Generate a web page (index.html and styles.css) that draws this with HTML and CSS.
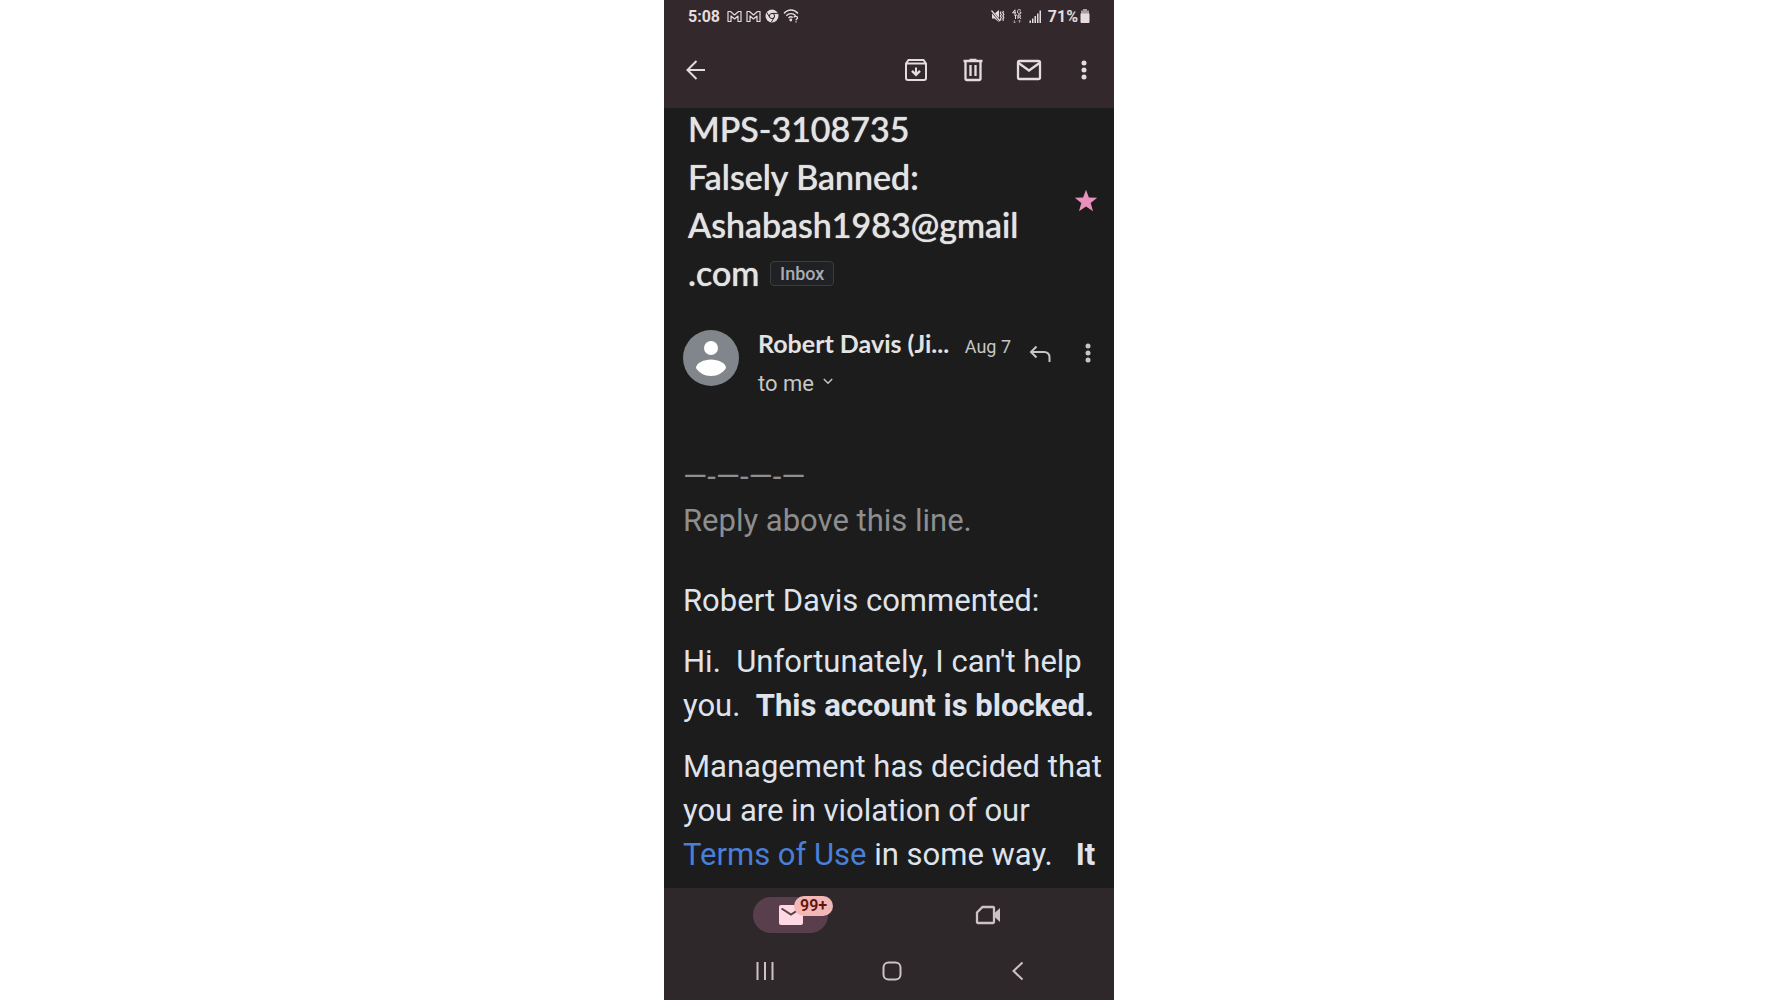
FILE: index.html
```html
<!DOCTYPE html>
<html lang="en">
<head>
<meta charset="utf-8">
<meta name="viewport" content="width=device-width, initial-scale=1">
<title>Mail</title>
<link rel="stylesheet" href="styles.css">
</head>
<body>
<div class="phone">
  <header class="top">
    <div class="status">
      <div class="status-group">
        <span class="time">5:08</span>
        <svg width="15" height="13" viewBox="0 0 15 13" fill="none" stroke="currentColor" stroke-width="1.2" stroke-linejoin="round"><path d="M1 1.500h2.500l4 3.500 4-3.500H14v10h-3V6L7.500 9 4 6v5.500H1z"/></svg>
        <svg width="15" height="13" viewBox="0 0 15 13" fill="none" stroke="currentColor" stroke-width="1.2" stroke-linejoin="round"><path d="M1 1.500h2.500l4 3.500 4-3.500H14v10h-3V6L7.500 9 4 6v5.500H1z"/></svg>
        <svg width="14" height="14" viewBox="0 0 14 14"><circle cx="7" cy="7" r="6.500" fill="currentColor"/><g fill="none" stroke="#33292d"><circle cx="7" cy="7" r="2.600"/><path d="M7 4.400h6M4.700 8.300 1.800 3.500M9.200 8.300 6.500 13"/></g></svg>
        <svg width="16" height="14" viewBox="0 0 16 14" fill="none" stroke="currentColor" stroke-width="1.300"><path d="M1 4.500C5-.2 11-.2 15 4.500M3.300 6.800c2.700-3 6.700-3 9.400 0M5.500 9c1.400-1.500 3-1.500 4.300-.5"/><circle cx="7.800" cy="11" r=".8" fill="currentColor"/><path d="M11 8.500c0-1.500 3.500-1.500 3.500.2 0 1.300-1.500 1.100-1.500 2.500M13 12.300v1.200"/></svg>
      </div>
      <div class="status-group status-right">
        <svg width="14" height="14" viewBox="0 0 14 14"><path d="M1 4.500h2.500L8 1v12L3.500 9.500H1z" fill="currentColor"/><path d="m.5 2 8.500 10" stroke="#33292d" stroke-width="2.500"/><path d="m.5 1.500 8.500 10.500" stroke="currentColor" stroke-width="1.200"/><path d="M10 2.500 9.300 4l1 1.500-1 1.500 1 1.500-1 1.500.7 1.500M12.500 2l-.7 1.700 1 1.600-1 1.600 1 1.600-1 1.600.7 1.600" fill="none" stroke="currentColor" stroke-width="1.200"/></svg>
        <svg width="12" height="15" viewBox="0 0 12 15" fill="none" stroke="currentColor"><path d="M4 5V.8L1.500 3.800H5M10 1.500C8-.3 6.500.8 6.500 2.800S8.500 5.500 9.800 4.500V3H8.500M3 6h3M4.500 6v4M7 10V6h1.500c1.500 0 1.500 2 0 2H7m1.500 0L10 10"/><path d="M3.500 11v3M2 12.500 3.500 14 5 12.500M8.500 14v-3M7 12.500 8.500 11l1.500 1.500" opacity=".5"/></svg>
        <svg width="13" height="13" viewBox="0 0 13 13" fill="currentColor"><path d="M.5 10.500h1.500V13H.5zM3 8.500h1.500V13H3zM5.500 6H7v7H5.500zM8 3.500h1.500V13H8zM10.500.5H12V13h-1.500z"/></svg>
        <span class="battery">71%<svg width="10" height="14" viewBox="0 0 10 14"><path d="M3 0h4v1.500h2V5H1V1.500h2z" fill="currentColor" opacity=".65"/><path d="M.5 4.500h9V13q0 1-1 1h-7q-1 0-1-1z" fill="currentColor"/></svg></span>
      </div>
    </div>
    <div class="toolbar">
      <button class="icon back" aria-label="Back"><svg width="20" height="20" viewBox="0 0 20 20" fill="none" stroke="currentColor" stroke-width="2"><path d="M19 10H2M10.500 1 1.500 10l9 9"/></svg></button>
      <button class="icon archive" aria-label="Archive"><svg width="24" height="24" viewBox="0 0 24 24" fill="none" stroke="currentColor" stroke-width="2"><path d="M2 5.500 4.500 2h15L22 5.500V20q0 2-2 2H4q-2 0-2-2zM2 5.500h20M12 9.500V16"/><path d="m8 12.800 4 4 4-4" stroke-width="2.400"/></svg></button>
      <button class="icon trash" aria-label="Delete"><svg width="22" height="24" viewBox="0 0 22 24" fill="none" stroke="currentColor" stroke-width="2.300"><path d="M1.500 3h19M7.500 1.800h7M3.500 3v17.500q0 1.500 1.500 1.500h12q1.500 0 1.500-1.500V3M8.500 7v11M13.500 7v11"/></svg></button>
      <button class="icon unread" aria-label="Mark as unread"><svg width="26" height="22" viewBox="0 0 26 22" fill="none" stroke="currentColor" stroke-width="2.300"><rect x="2" y="2" width="22" height="18" rx="1.500"/><path d="m2.500 4 10.500 7.500L23.500 4"/></svg></button>
      <button class="icon more" aria-label="More options"><svg width="6" height="22" viewBox="0 0 6 22" fill="currentColor"><circle cx="3" cy="4" r="2.500"/><circle cx="3" cy="11" r="2.500"/><circle cx="3" cy="18" r="2.500"/></svg></button>
    </div>
  </header>

  <main class="message">
    <div class="subject-row">
      <h1 class="subject">MPS-3108735<br>Falsely Banned: Ashabash1983@gmail<wbr>.com <span class="label">Inbox</span></h1>
      <button class="icon star" aria-label="Starred"><svg width="24" height="24" viewBox="0 0 24 24" fill="currentColor"><path d="m12 .8 2.900 7.700 8.300.3-6.500 5.200 2.300 8.200-7-4.600-7 4.600 2.300-8.200L.8 8.800l8.300-.3z"/></svg></button>
    </div>

    <section class="sender-row">
      <svg class="avatar" width="56" height="56" viewBox="0 0 56 56"><circle cx="28" cy="28" r="28" fill="#80868b"/><circle cx="28" cy="18" r="7" fill="#fff"/><path d="M13 38c0-5 8-8.500 15-8.500S43 33 43 38c-3 4.500-8 8-15 8s-12-3.500-15-8z" fill="#fff"/></svg>
      <div class="sender">
        <div class="sender-line"><span class="name">Robert Davis (Ji...</span><time class="date">Aug 7</time></div>
        <button class="recipient">to me <svg class="chevron" width="10" height="7" viewBox="0 0 10 7" fill="none" stroke="currentColor" stroke-width="1.500"><path d="m.8 1 4.200 4.200L9.200 1"/></svg></button>
      </div>
      <button class="icon reply" aria-label="Reply"><svg width="22" height="18" viewBox="0 0 22 18" fill="none" stroke="currentColor" stroke-width="2"><path d="M7.500 1.500 2 7l5.500 5.500M2 7h13q5.500 0 5.500 5.500V17"/></svg></button>
      <button class="icon more" aria-label="More message options"><svg width="6" height="22" viewBox="0 0 6 22" fill="currentColor"><circle cx="3" cy="4" r="2.500"/><circle cx="3" cy="11" r="2.500"/><circle cx="3" cy="18" r="2.500"/></svg></button>
    </section>

    <article class="body">
      <p class="quiet">—-—-—-—<br>Reply above this line.</p>
      <p>Robert Davis commented:</p>
      <p>Hi.&nbsp; Unfortunately, I can't help you.&nbsp; <b>This account is blocked.</b></p>
      <p>Management has decided that you are in violation of our <a href="#terms">Terms of Use</a> in some way.&nbsp;&nbsp; <b>It</b></p>
    </article>
  </main>

  <footer class="bottom">
    <nav class="tabs">
      <button class="tab" aria-label="Mail, 99+ unread"><span class="pill"><svg width="24" height="20" viewBox="0 0 24 20"><rect width="24" height="20" rx="2" fill="#ffd8e4"/><path d="m2.500 3.500 9.500 6 9.500-6" fill="none" stroke="#583f4b" stroke-width="2"/></svg><span class="badge">99+</span></span></button>
      <button class="tab" aria-label="Meet"><svg width="26" height="20" viewBox="0 0 26 20"><path d="M2 7.500 7.500 2H18q1 0 1 1v14q0 1-1 1H3q-1 0-1-1z" fill="none" stroke="currentColor" stroke-width="2.300"/><path d="M19 8.500 25 3v14l-6-5.500z" fill="currentColor"/></svg></button>
    </nav>
    <nav class="system">
      <button class="icon" aria-label="Recents"><svg width="20" height="20" viewBox="0 0 20 20" stroke="currentColor" stroke-width="2"><path d="M2.500 1v18M10 1v18M17.500 1v18"/></svg></button>
      <button class="icon" aria-label="Home"><svg width="20" height="20" viewBox="0 0 20 20" fill="none" stroke="currentColor" stroke-width="2"><rect x="1.500" y="1.500" width="17" height="17" rx="5"/></svg></button>
      <button class="icon" aria-label="Back"><svg width="20" height="20" viewBox="0 0 20 20" fill="none" stroke="currentColor" stroke-width="2"><path d="m14.500 1.500-9 8.500 9 8.500"/></svg></button>
    </nav>
  </footer>
</div>
</body>
</html>
```
FILE: styles.css
```css
* { box-sizing: border-box; }
body {
  margin: 0;
  background: #fff;
  font-family: Roboto, "Liberation Sans", sans-serif;
  color: #dfe3ec;
}
button {
  margin: 0;
  padding: 0;
  border: 0;
  background: none;
  color: inherit;
  font: inherit;
  cursor: pointer;
}
svg { display: block; flex: none; }
h1, p { margin: 0; }

.phone {
  display: flex;
  flex-direction: column;
  width: 100%;
  max-width: 450px;
  height: 100vh;
  margin: 0 auto;
  background: #1c1c1c;
  overflow: hidden;
}
.icon {
  display: flex;
  flex: none;
  align-items: center;
  justify-content: center;
}

.top { background: #33292d; color: #e4dcdf; }
.status {
  display: flex;
  align-items: center;
  justify-content: space-between;
  height: 32px;
  padding: 0 24px;
  font-size: 16px;
  font-weight: 700;
}
.status-group { display: flex; align-items: center; gap: 4px; }
.status-right { gap: 6px; }
.time { margin-right: 3px; }
.battery { display: flex; align-items: center; gap: 2px; }
.toolbar {
  display: flex;
  align-items: center;
  height: 76px;
  padding: 0 27px 0 22px;
}
.back { margin-right: auto; }
.archive { margin-right: 34px; }
.trash { margin-right: 32px; }
.unread { margin-right: 39px; }

.message { flex: 1; min-height: 0; overflow: hidden; }
.subject-row {
  display: flex;
  align-items: center;
  margin-top: -3px;
  padding: 0 16px 0 24px;
}
.subject {
  flex: 1;
  padding-right: 40px;
  font-family: Lato, Roboto, sans-serif;
  font-size: 34px;
  font-weight: 500;
  line-height: 48px;
  color: #e3e3e3;
  text-shadow: 0 0 1px #e3e3e3;
}
.label {
  display: inline-block;
  margin-left: 2px;
  padding: 0 9px;
  border: 1px solid #3a3c40;
  border-radius: 4px;
  background: #202124;
  color: #a9adb5;
  font: 500 18px/23px Roboto, sans-serif;
  text-shadow: none;
  vertical-align: 6px;
}
.star { color: #e991bd; }

.sender-row {
  display: flex;
  align-items: flex-start;
  padding: 27px 23px 0 19px;
}
.avatar { margin: 6px 19px 0 0; }
.sender { flex: 1; min-width: 0; }
.sender-line {
  display: flex;
  align-items: baseline;
  justify-content: space-between;
  line-height: 38px;
  white-space: nowrap;
}
.name {
  font-family: Lato, Roboto, sans-serif;
  font-size: 25px;
  font-weight: 700;
  color: #e3e3e3;
}
.date { font-size: 18px; color: #c4c7c5; }
.recipient {
  display: flex;
  align-items: center;
  gap: 9px;
  font-size: 22px;
  line-height: 36px;
  color: #c4c7c5;
}
.chevron { margin-bottom: 5px; }
.reply { margin: 21px 34px 0 18px; color: #c4c7c5; }
.sender-row .more { margin-top: 18px; color: #c4c7c5; }

.body {
  display: flex;
  flex-direction: column;
  gap: 17px;
  padding: 53px 8px 0 19px;
  font-size: 31px;
  line-height: 44px;
}
.quiet { margin-bottom: 19px; color: #8e8e8e; }
.body a { color: #4a7fd8; text-decoration: none; }

.bottom { flex: none; background: #2e282b; color: #cbc3c7; }
.tabs { display: flex; padding: 0 28px; height: 54px; }
.tab {
  display: flex;
  flex: 1;
  align-items: center;
  justify-content: center;
}
.pill {
  display: flex;
  position: relative;
  align-items: center;
  justify-content: center;
  width: 75px;
  height: 36px;
  border-radius: 18px;
  background: #583f4b;
}
.badge {
  position: absolute;
  top: -1px;
  left: 41px;
  padding: 0 6px;
  border-radius: 10px;
  background: #f2b8b5;
  color: #601410;
  font-size: 16px;
  font-weight: 600;
  line-height: 20px;
}
.system {
  display: flex;
  align-items: center;
  justify-content: space-between;
  height: 58px;
  padding: 0 86px 0 91px;
}
```
